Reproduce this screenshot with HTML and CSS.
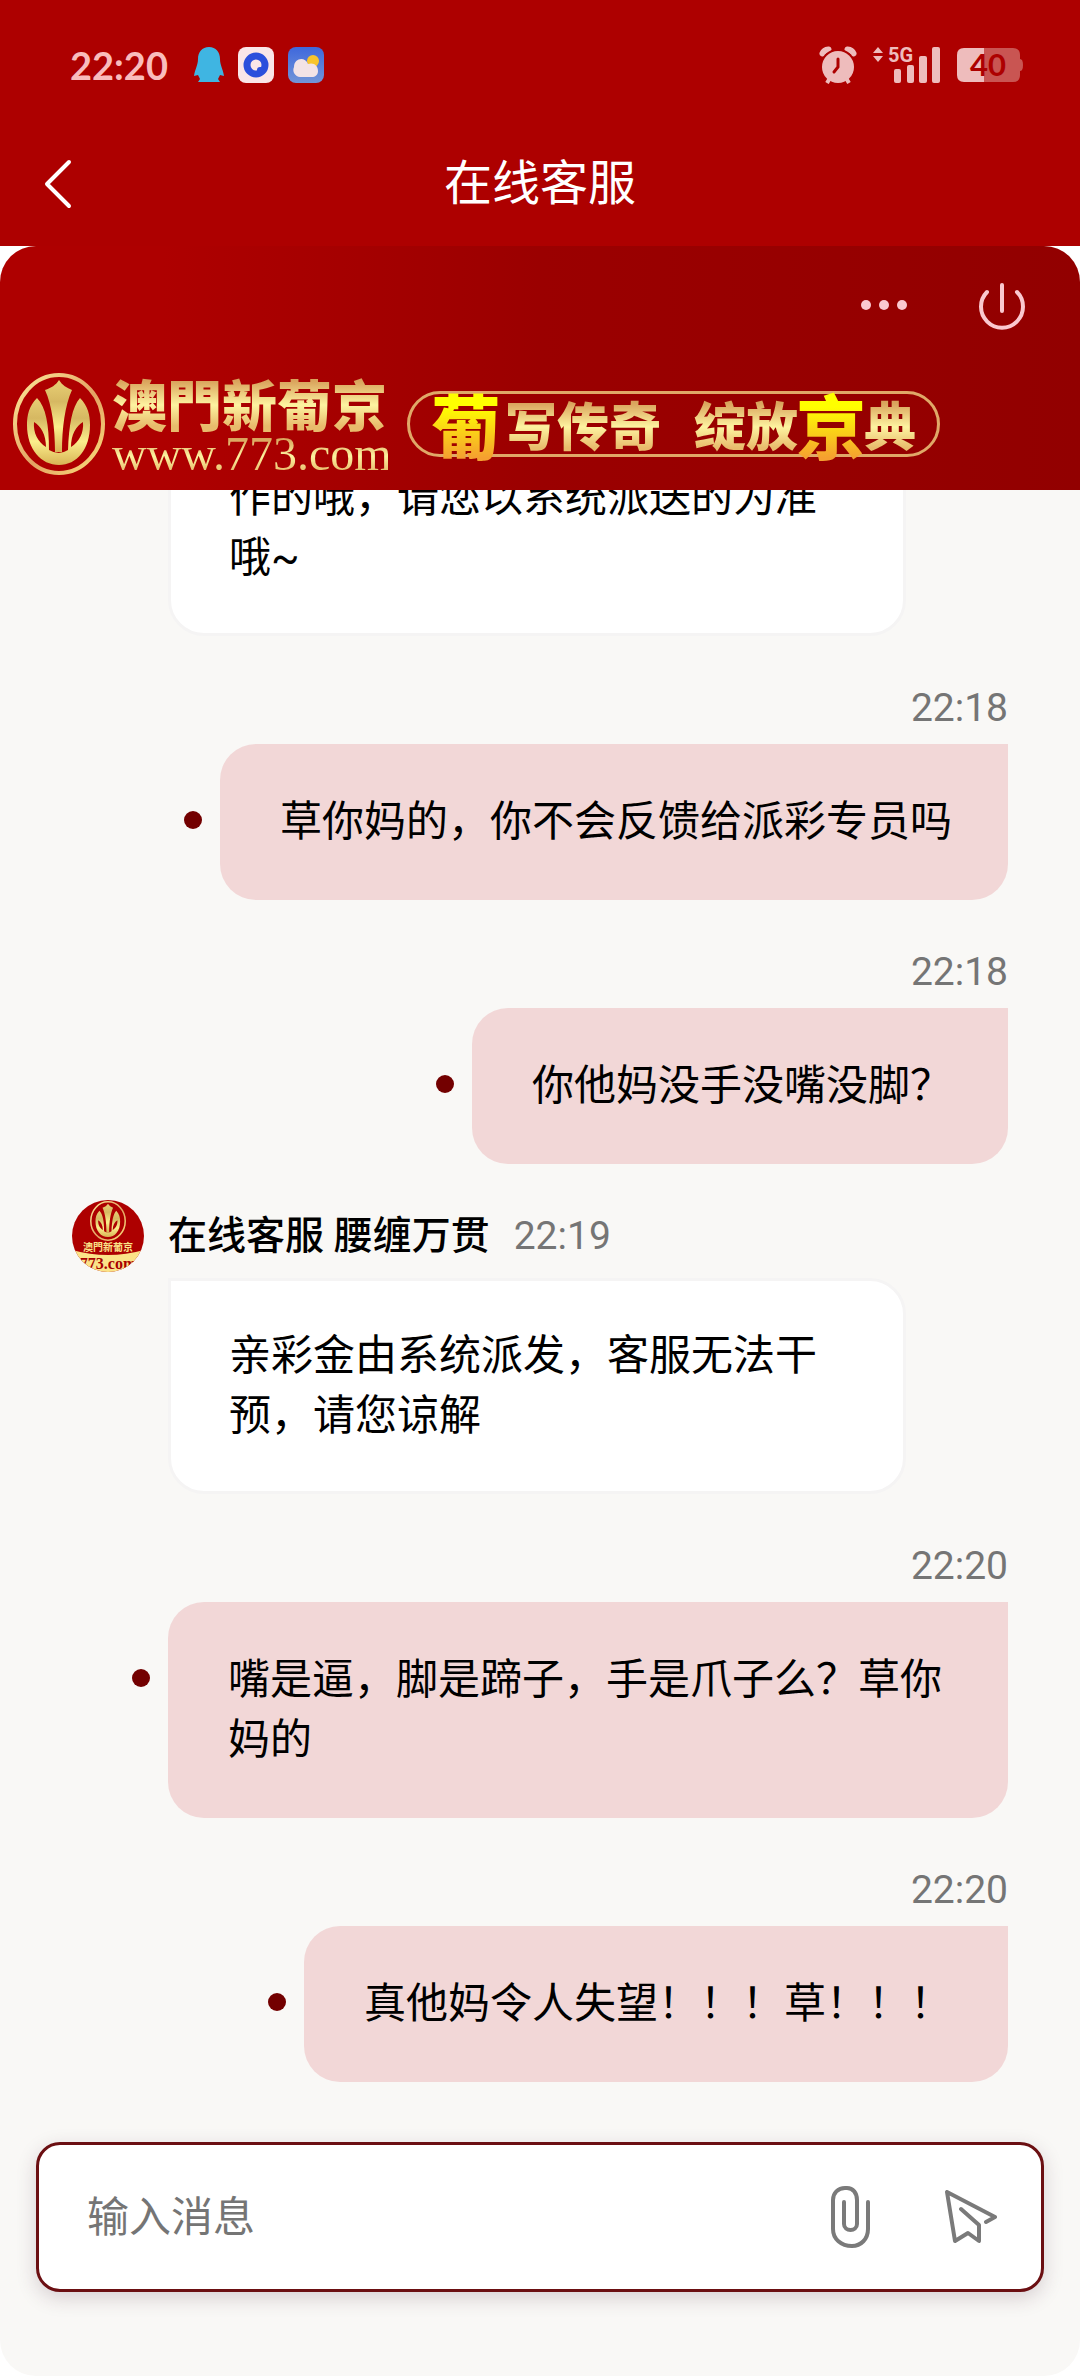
FILE: index.html
```html
<!DOCTYPE html>
<html lang="zh-CN">
<head>
    <meta charset="UTF-8">
    <meta name="viewport" content="width=device-width, initial-scale=1.0">
    <title>在线客服</title>
    <link rel="stylesheet" href="styles.css">
</head>
<body>
    <svg class="defs" width="0" height="0" aria-hidden="true">
        <defs>
            <linearGradient id="gold" x1="0" y1="0" x2="0" y2="1">
                <stop offset="0" stop-color="#e8cf75"/>
                <stop offset="0.3" stop-color="#d6b862"/>
                <stop offset="0.65" stop-color="#fbee8c"/>
                <stop offset="1" stop-color="#d8b455"/>
            </linearGradient>
            <linearGradient id="sky" x1="0" y1="0" x2="0" y2="1">
                <stop offset="0" stop-color="#3f68dc"/>
                <stop offset="1" stop-color="#7295d8"/>
            </linearGradient>
            <linearGradient id="ring" x1="0" y1="0" x2="1" y2="1">
                <stop offset="0" stop-color="#fdeb9a"/>
                <stop offset="0.55" stop-color="#e3a263"/>
                <stop offset="1" stop-color="#fbe07c"/>
            </linearGradient>
        </defs>
        <symbol id="emblem" viewBox="0 0 92 102">
            <ellipse cx="46" cy="51" rx="44" ry="49" fill="#ad0000" stroke="url(#ring)" stroke-width="4"/>
            <path fill="url(#gold)" d="M24 25C16 33 14 42 14 52C14 76 28 92 46 92C64 92 77 76 77 52C77 42 75 33 67 25C59 34 56 52 55 77Q46 83 36 77C36 52 33 34 24 25Z"/>
            <path fill="url(#gold)" d="M46 7C43 12 38 15 32 17C39 32 42 55 42 79H49C49 55 52 32 59 17C54 15 49 12 46 7Z"/>
            <path fill="#ad0000" d="M21 49C28 53 33 62 33 74C25 69 20 60 21 49ZM70 49C63 53 58 62 58 74C66 69 71 60 70 49Z"/>
        </symbol>
    </svg>

    <div class="app">
        <div class="status">
            <span class="clock">22:20</span>
            <svg width="30" height="36" viewBox="0 0 30 36">
                <path fill="#3fb5e2" d="M15 0C8 0 4 5 4 12C4 18 1 22 0 29L4 28L6 32L4 35H26L24 32L26 28L30 29C29 22 26 18 26 12C26 5 22 0 15 0Z"/>
            </svg>
            <svg width="36" height="36" viewBox="0 0 36 36">
                <rect width="36" height="36" rx="8" fill="#fae6e8"/>
                <circle cx="18" cy="18" r="9" fill="none" stroke="#2b4fdc" stroke-width="7"/>
                <path d="M19 25V23q0-3 3-3h5l-4 6z" fill="#2b4fdc"/>
            </svg>
            <svg width="36" height="36" viewBox="0 0 36 36">
                <rect width="36" height="36" rx="8" fill="url(#sky)"/>
                <circle cx="25" cy="14" r="6" fill="#f8c42c"/>
                <path fill="#f3e3e6" d="M12 30A7 7 0 0 1 6 20C6 11 17 9 20 17C26 15 30 19 30 24C30 28 27 30 24 30Z"/>
            </svg>
            <div class="status-right">
                <svg width="38" height="38" viewBox="0 0 38 38">
                    <path d="M3.500 7.500Q5 4 9.500 3.500M34.500 7.500Q33 4 28.500 3.500" fill="none" stroke="#eebcbc" stroke-width="6" stroke-linecap="round"/>
                    <circle cx="19" cy="21" r="18" fill="#ad0000"/>
                    <circle cx="19" cy="21" r="16" fill="#eebcbc"/>
                    <path d="M11 32L8 37M27 32L30 37" stroke="#eebcbc" stroke-width="4"/>
                    <path d="M19 13V21L15 26" fill="none" stroke="#ad0000" stroke-width="3" stroke-linecap="round"/>
                </svg>
                <svg class="signal" width="68" height="38" viewBox="0 0 68 38">
                    <path d="M0 7L5 1L10 7ZM0 10L5 16L10 10Z"/>
                    <text x="15" y="16">5G</text>
                    <rect x="21" y="23" width="7" height="14" rx="2"/>
                    <rect x="34" y="19" width="7" height="18" rx="2"/>
                    <rect x="46" y="10" width="8" height="27" rx="2"/>
                    <rect x="59" y="1" width="8" height="36" rx="2"/>
                </svg>
                <svg class="battery" width="67" height="36" viewBox="0 0 67 36">
                    <path fill="#c95552" d="M27 1H56Q63 1 63 8V12Q66 12 66 18T63 24V28Q63 35 56 35H27Z"/>
                    <path fill="#eebcbc" d="M27 1H7Q0 1 0 8V28Q0 35 7 35H27Z"/>
                    <text x="31" y="29">40</text>
                </svg>
            </div>
        </div>

        <div class="navbar">
            <button class="back" type="button" aria-label="返回">
                <svg width="28" height="50" viewBox="0 0 28 50">
                    <path d="M25 3L3 25L25 47" fill="none" stroke="#fff" stroke-width="4" stroke-linecap="round" stroke-linejoin="round"/>
                </svg>
            </button>
            <h1>在线客服</h1>
        </div>

        <div class="widget">
            <header class="banner">
                <div class="actions">
                    <button type="button" aria-label="更多">
                        <svg width="48" height="48" viewBox="0 0 48 48" fill="#fac8cf">
                            <circle cx="6" cy="23" r="5"/>
                            <circle cx="24" cy="23" r="5"/>
                            <circle cx="42" cy="23" r="5"/>
                        </svg>
                    </button>
                    <button type="button" aria-label="结束对话">
                        <svg width="48" height="48" viewBox="0 0 48 48" fill="none" stroke="#fac8cf" stroke-width="4" stroke-linecap="round">
                            <path d="M24 3V29"/>
                            <path d="M9 10A21 21 0 1 0 39 10"/>
                        </svg>
                    </button>
                </div>
                <div class="brand">
                    <svg class="emblem" width="92" height="102"><use href="#emblem"/></svg>
                    <div class="brand-text">
                        <div class="brand-name gold">澳門新葡京</div>
                        <div class="brand-url gold">www.773.com</div>
                    </div>
                    <div class="slogan">
                        <span class="big">葡</span>
                        <span class="gold">写传奇</span>
                        <span class="gold second">绽放</span>
                        <span class="big">京</span>
                        <span class="gold">典</span>
                    </div>
                </div>
            </header>

            <main class="chat">
                <div class="msg agent">
                    <div class="bubble">作的哦，请您以系统派送的为准哦~</div>
                </div>
                <div class="msg mine">
                    <div class="time">22:18</div>
                    <div class="row"><i class="dot"></i><div class="bubble">草你妈的，你不会反馈给派彩专员吗</div></div>
                </div>
                <div class="msg mine">
                    <div class="time">22:18</div>
                    <div class="row"><i class="dot"></i><div class="bubble">你他妈没手没嘴没脚？</div></div>
                </div>
                <div class="msg agent">
                    <div class="agent-head">
                        <svg class="avatar" width="72" height="72" viewBox="0 0 72 72">
                            <rect width="72" height="72" fill="#ad0000"/>
                            <path d="M0 50Q36 60 72 50V72H0Z" fill="#fbe388"/>
                            <use href="#emblem" x="18" y="1" width="36" height="40"/>
                            <text class="avatar-name" x="36" y="51">澳門新葡京</text>
                            <text class="avatar-url" x="36" y="69">773.com</text>
                        </svg>
                        <span class="name">在线客服 腰缠万贯</span>
                        <span class="time">22:19</span>
                    </div>
                    <div class="bubble">亲彩金由系统派发，客服无法干预，请您谅解</div>
                </div>
                <div class="msg mine">
                    <div class="time">22:20</div>
                    <div class="row"><i class="dot"></i><div class="bubble">嘴是逼，脚是蹄子，手是爪子么？草你妈的</div></div>
                </div>
                <div class="msg mine">
                    <div class="time">22:20</div>
                    <div class="row"><i class="dot"></i><div class="bubble">真他妈令人失望！！！草！！！</div></div>
                </div>
            </main>

            <form class="composer" onsubmit="event.preventDefault();">
                <input type="text" id="message" placeholder="输入消息" aria-label="输入消息">
                <button type="button" aria-label="附件">
                    <svg width="40" height="62" viewBox="0 0 40 62">
                        <path d="M37 16V43C37 53 30 60 21 60C10 60 2 53 2 43V14C2 7 7 2 14 2H16C22 2 26 7 26 14V38C26 46 13 46 13 38V16"/>
                    </svg>
                </button>
                <button type="submit" aria-label="发送">
                    <svg width="54" height="54" viewBox="0 0 54 54">
                        <path d="M42 32L51 27L3 2L11 51L24 43L35 51V35L17 19"/>
                    </svg>
                </button>
            </form>
        </div>
    </div>
</body>
</html>
```

FILE: styles.css
```css
* { box-sizing: border-box; }
body {
    margin: 0;
    background: #fff;
    font-family: Roboto, "Noto Sans CJK SC", sans-serif;
    color: #000;
}
button { padding: 0; border: 0; background: none; cursor: pointer; }
svg { display: block; flex: none; }
.defs { position: absolute; }

.app { display: flex; flex-direction: column; height: 100vh; }

/* phone status bar */
.status {
    display: flex;
    align-items: center;
    gap: 14px;
    height: 126px;
    padding: 4px 56px 0 70px;
    background: #ad0000;
}
.clock { margin-right: 12px; font: 700 38px Lato, sans-serif; color: #f9bcbc; }
.status-right { display: flex; align-items: center; gap: 16px; margin-left: auto; }
.signal { overflow: visible; fill: #eebcbc; font: 700 20px Roboto, sans-serif; }
.battery { overflow: visible; }
.battery text { fill: #ad0000; font: 700 31px Lato, sans-serif; text-anchor: middle; }

/* title bar */
.navbar {
    display: grid;
    grid-template-columns: 72px 1fr 72px;
    align-items: center;
    height: 120px;
    padding: 0 44px 4px;
    background: #ad0000;
}
.navbar h1 { margin: 0; font-size: 48px; font-weight: 400; line-height: 60px; text-align: center; color: #fff; }

.widget {
    display: flex;
    flex: 1;
    flex-direction: column;
    min-height: 0;
    border-radius: 36px;
    overflow: hidden;
    background: #f9f8f6;
}

/* brand banner */
.banner { flex: none; height: 244px; background: linear-gradient(to right, #ae0000 15%, #9b0000 50%, #920000); }
.actions { display: flex; align-items: center; justify-content: flex-end; gap: 70px; height: 120px; padding-right: 54px; }
.brand { display: flex; align-items: center; height: 116px; padding-left: 13px; }
.brand-text { width: 276px; margin: 0 19px 0 7px; }
.gold {
    background: linear-gradient(#d9a35c 15%, #fdf3a0 55%, #e8bb6c 90%);
    background-clip: text;
    -webkit-background-clip: text;
    color: transparent;
}
.brand-name { font: 900 55px/60px "Noto Sans CJK TC", sans-serif; }
.brand-url { font: 400 48px/44px "Liberation Serif", serif; white-space: nowrap; }
.slogan {
    display: flex;
    align-items: center;
    width: 533px;
    height: 66px;
    padding-left: 21px;
    border: 3px solid #e0a868;
    border-radius: 33px;
    font: 900 52px/60px "Noto Sans CJK SC", sans-serif;
}
.slogan .big {
    margin: 0 -2px;
    font-size: 70px;
    line-height: 84px;
    background: linear-gradient(#ffff00 30%, #f5a030 90%);
    background-clip: text;
    -webkit-background-clip: text;
    color: transparent;
}
.slogan .big:first-child { margin: 0 4px 0 0; }
.slogan .second { margin-left: 33px; }

/* messages */
.chat {
    display: flex;
    flex: 1;
    flex-direction: column;
    justify-content: flex-end;
    gap: 36px;
    min-height: 0;
    overflow: hidden;
    padding: 0 72px 60px;
}
.msg { flex: none; }
.mine { display: flex; flex-direction: column; align-items: flex-end; }
.row { display: flex; gap: 18px; padding-left: 60px; }
.time { font-size: 39px; line-height: 66px; color: #757575; }
.mine .time { padding: 3px 0; }
.dot { flex: none; width: 18px; height: 18px; margin-top: 67px; border-radius: 50%; background: #730000; }
.bubble { padding: 48px 56px 48px 60px; font-size: 42px; line-height: 60px; }
.mine .bubble { border-radius: 36px 0 36px 36px; background: #f2d7d7; }
.agent .bubble {
    margin: 0 102px 0 96px;
    padding: 45px 55px 45px 58px;
    border: 3px solid #f5f4f4;
    border-radius: 0 36px 36px 36px;
    background: #fff;
}
.agent-head { display: flex; align-items: center; gap: 24px; margin-bottom: 6px; }
.name { font-size: 39px; font-weight: 500; line-height: 66px; }
.avatar { border-radius: 50%; }
.avatar text { text-anchor: middle; }
.avatar-name { fill: #fbe388; font: 700 10px "Noto Sans CJK TC", sans-serif; }
.avatar-url { fill: #a80000; font: 700 16px "Liberation Serif", serif; }

/* input */
.composer {
    display: flex;
    flex: none;
    align-items: center;
    height: 150px;
    margin: 0 36px 84px;
    padding: 0 43px 0 48px;
    border: 3px solid #6b0f12;
    border-radius: 24px;
    background: #fff;
    box-shadow: 0 6px 20px rgba(60, 30, 50, 0.18);
}
.composer input {
    flex: 1;
    min-width: 0;
    height: 72px;
    padding: 0;
    border: 0;
    outline: 0;
    background: none;
    font: inherit;
    font-size: 42px;
}
.composer input::placeholder { color: #757575; opacity: 1; }
.composer button + button { margin-left: 73px; }
.composer path { fill: none; stroke: #7a7a7a; stroke-width: 4; stroke-linecap: round; stroke-linejoin: round; }
```
